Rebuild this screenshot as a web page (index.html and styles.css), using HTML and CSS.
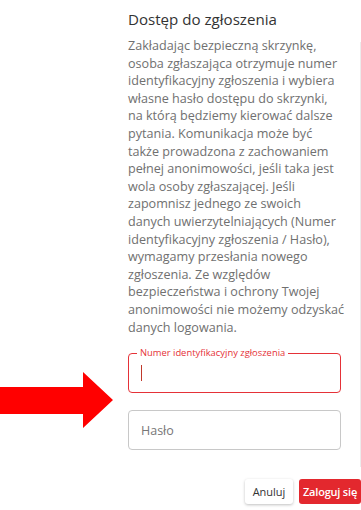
FILE: index.html
```html
<!DOCTYPE html>
<html lang="pl">
<head>
<meta charset="utf-8">
<link rel="stylesheet" href="styles.css">
</head>
<body>
<div class="page">
  <svg class="arrow" width="114" height="58" viewBox="0 0 114 58" aria-hidden="true">
    <polygon points="0,15 83,15 83,0 113,28 83,56 83,42 0,42" fill="#ff0000"/>
  </svg>
  <div class="dialog">
    <h2 class="title">Dostęp do zgłoszenia</h2>
    <p class="desc">Zakładając bezpieczną skrzynkę,<br>
osoba zgłaszająca otrzymuje numer<br>
identyfikacyjny zgłoszenia i wybiera<br>
własne hasło dostępu do skrzynki,<br>
na którą będziemy kierować dalsze<br>
pytania. Komunikacja może być<br>
także prowadzona z zachowaniem<br>
pełnej anonimowości, jeśli taka jest<br>
wola osoby zgłaszającej. Jeśli<br>
zapomnisz jednego ze swoich<br>
danych uwierzytelniających (Numer<br>
identyfikacyjny zgłoszenia / Hasło),<br>
wymagamy przesłania nowego<br>
zgłoszenia. Ze względów<br>
bezpieczeństwa i ochrony Twojej<br>
anonimowości nie możemy odzyskać<br>
danych logowania.</p>
    <div class="fields">
      <div class="field field-active">
        <span class="field-label">Numer identyfikacyjny zgłoszenia</span>
        <span class="caret"></span>
      </div>
      <div class="field">
        <span class="placeholder">Hasło</span>
      </div>
    </div>
    <div class="actions">
      <button class="btn btn-cancel">Anuluj</button>
      <button class="btn btn-primary">Zaloguj się</button>
    </div>
  </div>
  <div class="scroll-edge"></div>
</div>
</body>
</html>
```
FILE: styles.css
```css
* { box-sizing: border-box; }
html, body {
  margin: 0;
  padding: 0;
  background: #fff;
}
body {
  font-family: "Open Sans", "Noto Sans", sans-serif;
  width: 361px;
  height: 510px;
  overflow: hidden;
}
.page {
  position: relative;
  width: 361px;
  height: 510px;
  display: flex;
}
.arrow {
  position: absolute;
  left: 0;
  top: 372px;
}
.dialog {
  margin-left: 128px;
  width: 233px;
  display: flex;
  flex-direction: column;
}
.title {
  margin: 8px 0 0;
  font-size: 15.1px;
  font-weight: 400;
  line-height: 22px;
  color: #333;
}
.desc {
  margin: 7px 0 0;
  width: 230px;
  font-size: 12.6px;
  line-height: 17.6px;
  color: #707070;
  white-space: nowrap;
}
.fields {
  margin-top: 17px;
  width: 213px;
  display: flex;
  flex-direction: column;
  gap: 17px;
}
.field {
  position: relative;
  height: 40px;
  border: 1px solid #c8c8c8;
  border-radius: 4px;
  display: flex;
  align-items: center;
  padding-left: 12px;
}
.field-active {
  border: 1.5px solid #e53238;
}
.field-label {
  position: absolute;
  left: 8px;
  top: -8px;
  padding: 0 3px;
  background: #fff;
  font-size: 9.4px;
  line-height: 14px;
  color: #e53238;
}
.caret {
  display: block;
  width: 1px;
  height: 16px;
  background: #c0392b;
}
.placeholder {
  font-size: 12.5px;
  color: #777;
}
.actions {
  margin-top: 29px;
  display: flex;
  justify-content: flex-end;
  gap: 6px;
}
.btn {
  height: 25px;
  border: none;
  border-radius: 3px;
  font-family: "Open Sans", "Noto Sans", sans-serif;
  font-size: 11px;
  padding: 0;
  cursor: pointer;
  white-space: nowrap;
}
.btn-cancel {
  width: 48px;
  background: #fff;
  color: #333;
  box-shadow: 0 1px 3px rgba(0,0,0,0.25);
}
.btn-primary {
  width: 62px;
  background: #e3282e;
  color: #fff;
  font-weight: 600;
  letter-spacing: -0.2px;
}
.scroll-edge {
  position: absolute;
  right: 0;
  top: 42px;
  width: 1px;
  height: 425px;
  background: #ececec;
}
```
